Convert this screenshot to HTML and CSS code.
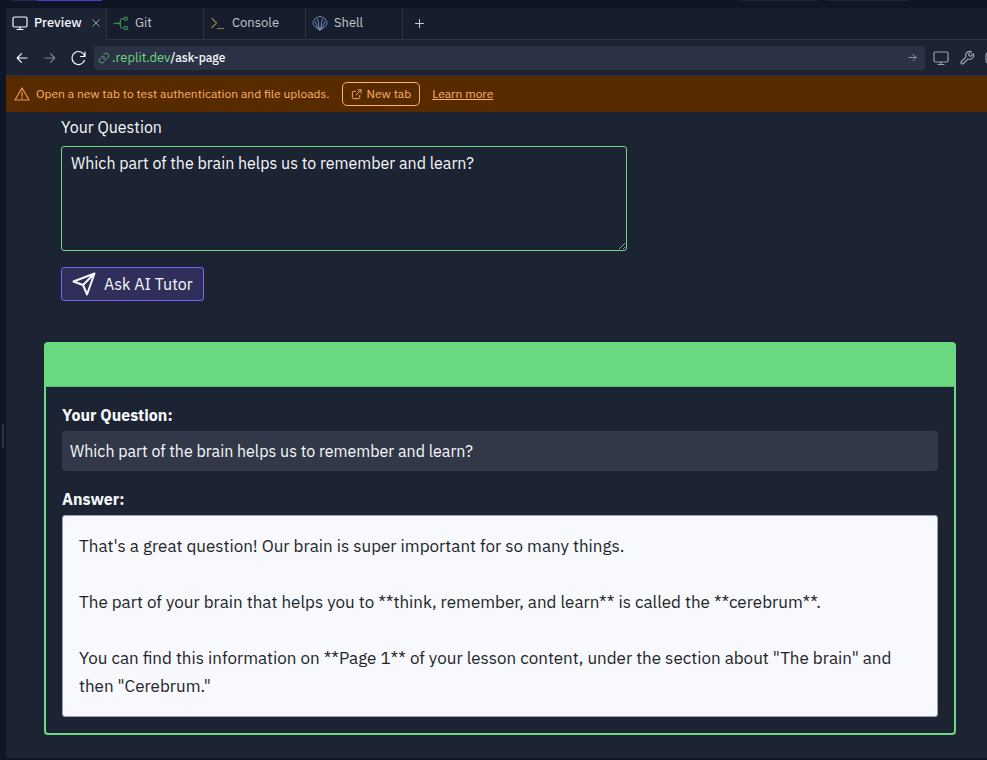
FILE: index.html
```html
<!DOCTYPE html>
<html lang="en">
<head>
<meta charset="utf-8">
<meta name="viewport" content="width=device-width, initial-scale=1">
<title>Preview</title>
<link rel="stylesheet" href="styles.css">
</head>
<body>
<div class="workspace">
  <div class="top-strip">
    <span class="strip-a"></span><span class="strip-b"></span><span class="strip-space"></span><span class="strip-c"></span><span class="strip-d"></span>
  </div>
  <div class="gutter"><span class="handle"></span></div>
  <div class="pane">
    <nav class="tabs" aria-label="Panes">
      <div class="tab tab-active">
        <svg class="icon" viewBox="0 0 16 16"><rect x="1" y="2" width="14" height="10" rx="1.5"/><path d="M8 12v2.500M5 14.500h6"/></svg>
        <a href="#preview">Preview</a>
        <button class="close" aria-label="Close tab"><svg class="icon-close" viewBox="0 0 8 8"><path d="M.8.800l6.400 6.400M7.200.800.800 7.200"/></svg></button>
      </div>
      <div class="tab tab-git">
        <svg class="icon git" viewBox="0 0 16 16"><circle cx="12.800" cy="3.800" r="1.700"/><circle cx="12.800" cy="13" r="1.700"/><path d="M1 8.400h4.500"/><circle cx="6" cy="8.400" r=".6"/><path d="M11 3.800H8.800q-1.300 0-1.300 1.300v6.600q0 1.300 1.300 1.300H11M6 8.400h1.500"/></svg>
        <a href="#git">Git</a>
      </div>
      <div class="tab tab-console">
        <svg class="icon console" viewBox="0 0 16 16"><path d="M2 3.500 6.500 8 2 12.500M7.500 13.500H13.500"/></svg>
        <a href="#console">Console</a>
      </div>
      <div class="tab tab-shell">
        <svg class="icon shell" viewBox="0 0 16 16"><path d="M5.500 13.500C3 12 1 10 1 7.800c0-1.600.8-2.500 1.800-2.800C3 3 4.500 2.200 5.500 2.600 6.200 1 9.800 1 10.500 2.600c1-.4 2.500.4 2.700 2.400 1 .3 1.800 1.200 1.800 2.800 0 2.200-2 4.200-4.500 5.700L8 15.200zM7 12.500 5.800 4M9 12.500 10.200 4M5.800 12.500 3.200 7M10.200 12.500l2.600-5.500"/><path class="shell-base" d="M5.800 13.200h4.400L8 15z"/></svg>
        <a href="#shell">Shell</a>
      </div>
      <button class="add" aria-label="New tab"><svg class="icon-add" viewBox="0 0 10 10"><path d="M5 .500v9M.500 5h9"/></svg></button>
    </nav>
    <div class="toolbar">
      <div class="nav-buttons">
        <button aria-label="Back"><svg class="icon" viewBox="0 0 16 16"><path d="M13 8H3.200M7.500 3.700 3.200 8l4.300 4.300"/></svg></button>
        <button class="muted" aria-label="Forward"><svg class="icon" viewBox="0 0 16 16"><path d="M3 8h9.800M8.500 3.700 12.800 8l-4.300 4.300"/></svg></button>
        <button aria-label="Reload"><svg class="icon" viewBox="0 0 16 16"><path d="M15 2v4.500h-4.500M14.800 6.500A6.500 6.500 0 1 0 14.500 10.500"/></svg></button>
      </div>
      <div class="address">
        <svg class="icon-link" viewBox="0 0 16 16"><path d="M6.600 8.700a3.400 3.400 0 0 0 5 .4l2-2a3.400 3.400 0 0 0-4.800-4.800L7.600 3.400M9.400 7.300a3.400 3.400 0 0 0-5-.4l-2 2a3.400 3.400 0 0 0 4.800 4.800l1.100-1.100"/></svg>
        <a class="url" href="#preview"><span class="host">.replit.dev</span>/ask-page</a>
        <button class="go" aria-label="Go"><svg class="icon-small" viewBox="0 0 10 10"><path d="M1 5h8M5.500 1.500 9 5 5.500 8.500"/></svg></button>
      </div>
      <div class="tools">
        <button aria-label="Device size"><svg class="icon" viewBox="0 0 16 16"><rect x="1" y="2" width="14" height="10" rx="1.500"/><path d="M8 12v2.500M5 14.500h6"/></svg></button>
        <button aria-label="Developer tools"><svg class="icon" viewBox="0 0 24 24"><path class="bold" d="M14.700 6.300a1 1 0 0 0 0 1.400l1.600 1.600a1 1 0 0 0 1.400 0l3.800-3.800a6 6 0 0 1-7.900 7.900l-6.900 6.900a2.100 2.100 0 0 1-3-3l6.900-6.900a6 6 0 0 1 7.900-7.900z"/></svg></button>
        <button aria-label="Open externally"><svg class="icon" viewBox="0 0 16 16"><rect x="1" y="3" width="13" height="10" rx="2"/></svg></button>
      </div>
    </div>
    <div class="banner">
      <svg class="icon warning" viewBox="0 0 16 16"><path d="M8 2 15 14H1zM8 6.200v3.800M8 11.500v1"/></svg>
      <span class="banner-text">Open a new tab to test authentication and file uploads.</span>
      <button class="new-tab"><svg class="icon-open" viewBox="0 0 12 12"><path d="M5 2.500H2.500q-1 0-1 1v6q0 1 1 1h6q1 0 1-1V7M7.500 1H11v3.500M11 1 5.500 6.500"/></svg>New tab</button>
      <a class="learn" href="#learn">Learn more</a>
    </div>
    <main class="page">
      <form class="ask">
        <label for="question">Your Question</label>
        <textarea id="question" spellcheck="false">Which part of the brain helps us to remember and learn?</textarea>
        <button class="submit" type="button"><svg class="icon-send" viewBox="0 0 24 24"><path d="M22.500 1.500 15 22.500 11 13 1.500 9.500zM22.500 1.500 11 13"/></svg>Ask AI Tutor</button>
      </form>
      <section class="result">
        <header class="result-head"></header>
        <div class="result-body">
          <h2>Your Question:</h2>
          <p class="asked">Which part of the brain helps us to remember and learn?</p>
          <h2>Answer:</h2>
          <div class="answer">
            <p>That's a great question! Our brain is super important for so many things.</p>
            <p>The part of your brain that helps you to **think, remember, and learn** is called the **cerebrum**.</p>
            <p>You can find this information on **Page 1** of your lesson content, under the section about "The brain" and then "Cerebrum."</p>
          </div>
        </div>
      </section>
    </main>
  </div>
</div>
</body>
</html>
```
FILE: styles.css
```css
* { box-sizing: border-box; }
body {
  margin: 0;
  background: #0e1525;
  color: #f5f9fc;
  font-family: "IBM Plex Sans", Inter, sans-serif;
  font-size: 16px;
  line-height: 24px;
}
button { font: inherit; color: inherit; background: none; border: 0; padding: 0; display: flex; align-items: center; }
a { color: inherit; text-decoration: none; }
h2, p { margin: 0; }
svg { display: block; flex: none; fill: none; stroke: currentColor; stroke-width: 1.2; stroke-linejoin: round; stroke-linecap: round; }
.icon { width: 16px; height: 16px; }
.bold { stroke-width: 1.8; }

.workspace {
  display: grid;
  grid-template-columns: 6px minmax(0, 1fr);
  grid-template-rows: 8px 1fr;
  min-height: 100vh;
  padding-bottom: 2px;
  overflow: hidden;
}
.top-strip { grid-column: 1 / -1; display: flex; height: 1px; padding: 0 78px 0 12px; }
.strip-a { width: 25px; background: #29235a; }
.strip-b { width: 65px; background: #5038cc; }
.strip-space { flex: 1; }
.strip-c { width: 77px; margin-right: 8px; background: #1c2333; }
.strip-d { width: 84px; background: #1c2333; }
.gutter { display: flex; align-items: center; padding: 0 2px; }
.handle { width: 2px; height: 24px; margin-top: 106px; background: #2b3245; }
.pane { background: #1c2333; border-radius: 4px 0 0 0; overflow: hidden; }

.tabs { display: flex; height: 32px; background: #171d2d; font-size: 13px; color: #c2c8cc; }
.tab { display: flex; align-items: center; gap: 6px; padding: 0 6px 2px; border-right: 1px solid #2b3245; border-bottom: 1px solid #2b3245; }
.tab-active { width: 101px; background: #1c2333; border-bottom-color: #1c2333; color: #f5f9fc; }
.tab-git, .tab-shell { width: 97px; }
.tab-console { width: 102px; }
.tab a { font-weight: 400; }
.tab-active a { font-weight: 500; }
.close { margin-left: auto; color: #9da2a6; }
.icon-close { width: 8px; height: 8px; stroke-width: 1; }
.git { color: #3d8553; }
.console { color: #8d7d4b; }
.shell { color: #708bb5; stroke-width: 1; }
.shell-base { fill: currentColor; }
.add { flex: 1; padding-left: 12px; border-bottom: 1px solid #2b3245; color: #c2c8cc; }
.icon-add { width: 9px; height: 9px; }

.toolbar { display: flex; align-items: center; height: 36px; margin-right: -14px; border-bottom: 1px solid #2b3245; }
.nav-buttons { display: flex; gap: 12px; padding: 0 8px; }
.muted { color: #7f858f; }
.address { flex: 1; display: flex; align-items: center; gap: 2px; height: 24px; padding: 0 8px 0 4px; background: #2b3245; border-radius: 4px; font-size: 12px; font-weight: 500; }
.icon-link { width: 12px; height: 12px; color: #5cb874; }
.host { color: #6bd97f; font-size: 13px; font-weight: 400; }
.go { margin-left: auto; color: #9da2a6; }
.icon-small { width: 9px; height: 9px; stroke-width: 1; }
.tools { display: flex; gap: 10px; padding-left: 8px; color: #9da2a6; }

.banner { display: flex; align-items: center; height: 36px; padding-left: 8px; background: #572a00; color: #ffb36b; font-size: 12px; }
.banner-text { margin-left: 6px; }
.warning { color: #e89a55; }
.new-tab { gap: 5px; height: 24px; margin: 0 12px; padding: 0 8px; border: 1px solid #ffb36b; border-radius: 5px; }
.icon-open { width: 11px; height: 11px; stroke-width: 1; }
.learn { text-decoration: underline; }

.page { padding: 0 31px 22px 38px; }
.ask { width: 600px; max-width: 100%; padding: 3px 16px 16px; border: 1px solid #1a2130; border-top: 0; border-radius: 0 0 4px 4px; }
.ask label { display: block; margin-bottom: 7px; }
.ask textarea {
  display: block;
  width: 100%;
  height: 105px;
  margin-bottom: 16px;
  padding: 4px 9px;
  border: 1px solid #6bd97f;
  border-radius: 3px;
  background: #1c2333;
  color: #f5f9fc;
  font: inherit;
  outline: none;
  resize: vertical;
}
.submit { gap: 8px; height: 34px; padding: 0 10px; border: 1px solid #7866f5; border-radius: 3px; background: #302f5c; }
.icon-send { width: 24px; height: 24px; stroke-width: 2; }
.result { margin-top: 24px; border: 2px solid #6bd97f; border-radius: 4px; }
.result-head { height: 43px; background: #6bd97f; border-bottom: 1px solid #5cb874; }
.result-body { padding: 16px; }
.result h2 { font-size: 16px; line-height: 24px; font-weight: 700; margin-bottom: 4px; }
.asked { margin-bottom: 16px; padding: 8px; border-radius: 3px; background: #333848; }
.answer { display: grid; gap: 28px; padding: 16px; border: 1px solid #9aa3b5; border-radius: 3px; background: #f8f9fc; color: #212529; font-size: 17px; line-height: 28px; }
```
